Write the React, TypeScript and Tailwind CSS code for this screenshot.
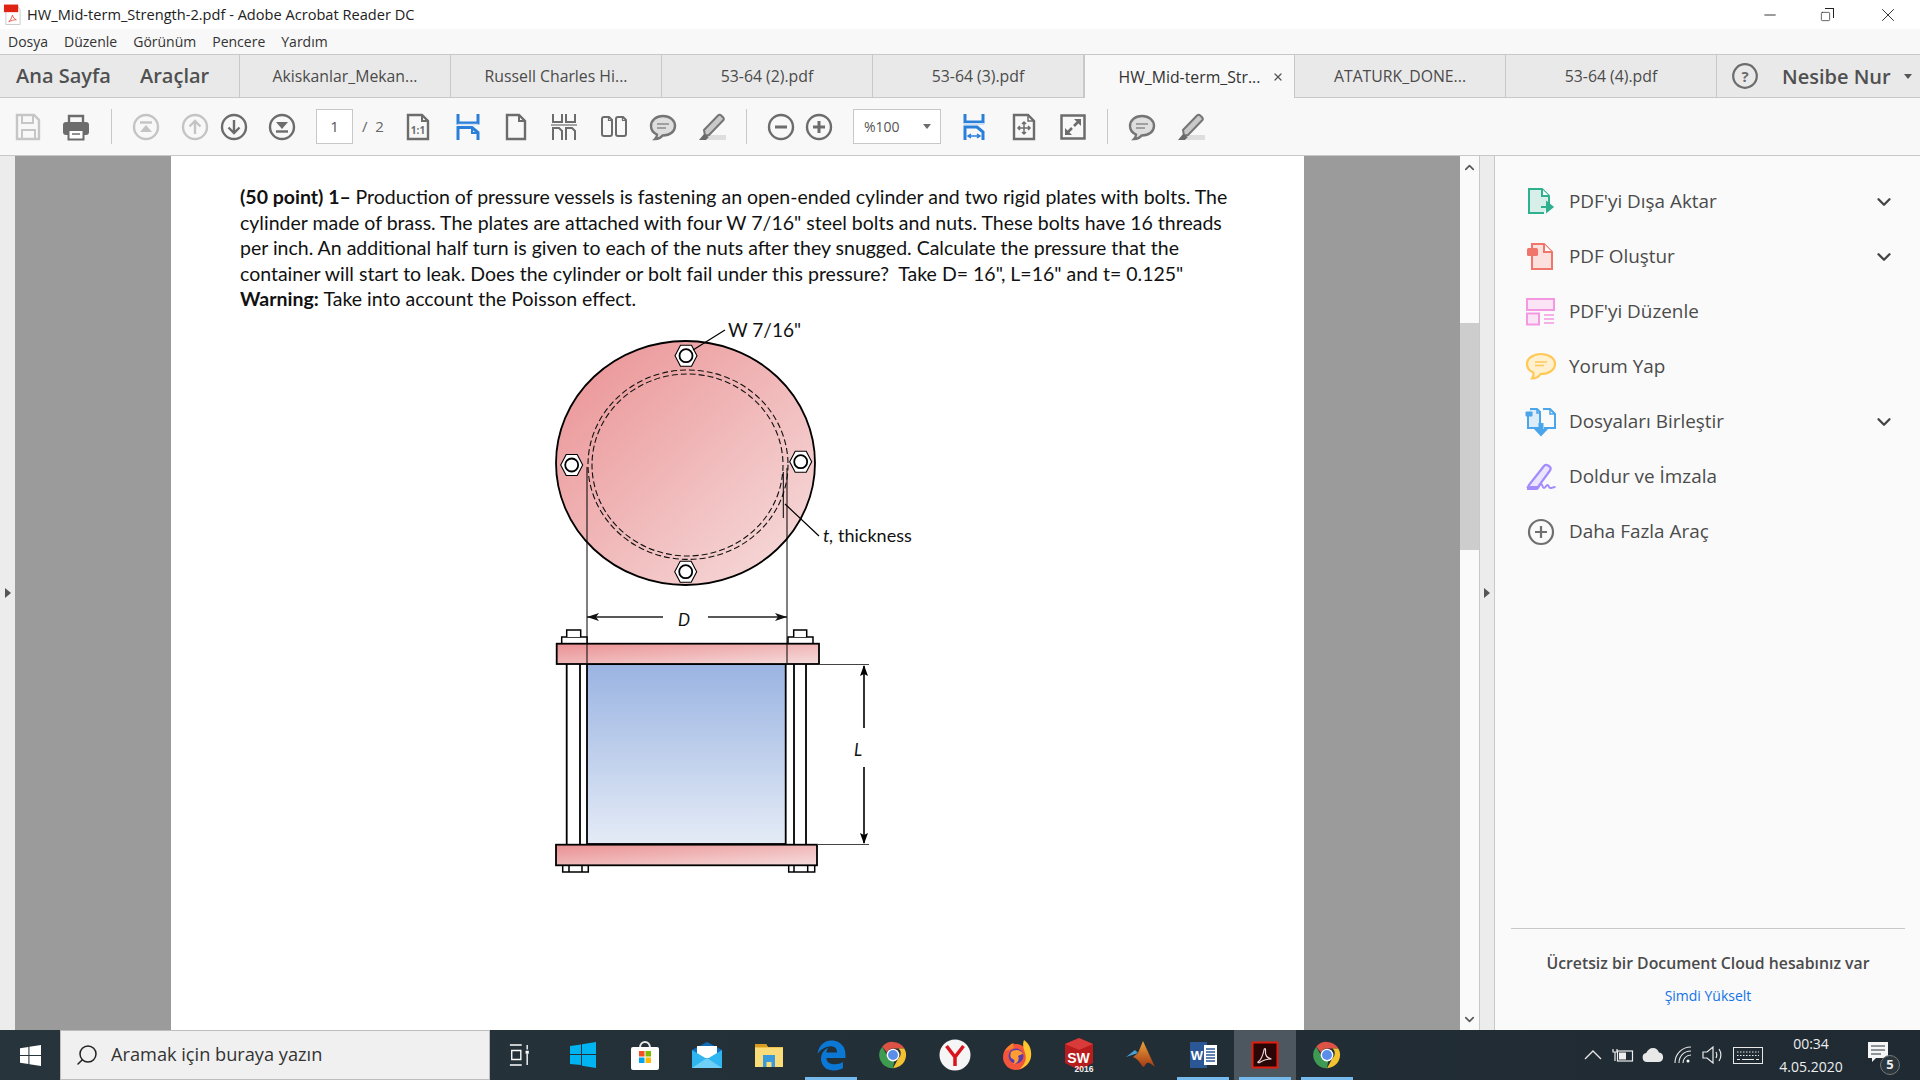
import type { ReactNode } from "react";
import { ChevronDown, ChevronUp, Minus, Search, Square, X } from "lucide-react";
import { FaEdgeLegacy } from "react-icons/fa";

const menus = ["Dosya", "Düzenle", "Görünüm", "Pencere", "Yardım"];

function Slot({ className, children }: { className: string; children: ReactNode }) {
  return <div className={`flex h-7 w-7 shrink-0 items-center justify-center ${className}`}>{children}</div>;
}

function Ico({ children }: { children: ReactNode }) {
  return (
    <svg viewBox="0 0 28 28" width="28" height="28" fill="none" strokeWidth="2.4">
      {children}
    </svg>
  );
}

function CircleIcon({ color, children }: { color: string; children: ReactNode }) {
  return (
    <Ico>
      <circle cx="14" cy="14" r="12" stroke={color} />
      {children}
    </Ico>
  );
}

function Comment() {
  return (
    <Ico>
      <path d="M14 3C7 3 2 7.500 2 13c0 4 2.500 7 6 8.500 0 2-1 3.500-2 4.500 3.500 0 6-1.500 7.500-3.500h.5c7 0 12-4 12-9.500S21 3 14 3z" fill="#dedede" stroke="#757575" />
      <path d="M8 11h12M8 15h9" stroke="#8a8a8a" strokeWidth="1.500" />
    </Ico>
  );
}

function Highlighter() {
  return (
    <Ico>
      <path d="M9 27h19v-5H12z" fill="#dedede" />
      <path d="M6 17 20 2.500c1-1 2.200-1 3.200 0l1.800 1.800c1 1 1 2.200 0 3.200L11 22l-4 .5z" fill="#c9c9c9" stroke="#757575" strokeWidth="2" />
      <path d="M6 21 1 27h7l3-3z" fill="#6a6a6a" />
    </Ico>
  );
}

function Separator() {
  return <div className="ml-[20px] h-[35px] w-px shrink-0 bg-[#c9c9c9]" />;
}

function Toolbar() {
  return (
    <div className="flex h-[58px] shrink-0 items-center border-b border-[#c8c8c8] bg-[#f8f8f8]">
      <Slot className="ml-[14px]">
        <Ico>
          <path d="M3 2h17l5 5v19H3z" stroke="#c6c6c6" />
          <path d="M8 3v7h11V3M8 26v-9h13v9" stroke="#c6c6c6" strokeWidth="2" />
        </Ico>
      </Slot>
      <Slot className="ml-[20px]">
        <Ico>
          <path d="M7 9V3h14v6" stroke="#6c6c6c" />
          <rect x="1" y="9" width="26" height="13" rx="3" fill="#6c6c6c" />
          <rect x="6.500" y="17" width="15" height="9.500" fill="#fff" stroke="#6c6c6c" strokeWidth="2" />
          <path d="M10 21h8" stroke="#6c6c6c" strokeWidth="1.500" />
        </Ico>
      </Slot>
      <div className="ml-[21px] h-[35px] w-px shrink-0 bg-[#c9c9c9]" />
      <Slot className="ml-[20px]">
        <CircleIcon color="#c4c4c4">
          <path d="M8 9.500h12" stroke="#c4c4c4" />
          <path d="M14 12 8 19h12z" fill="#c4c4c4" />
        </CircleIcon>
      </Slot>
      <Slot className="ml-[21px]">
        <CircleIcon color="#c4c4c4">
          <path d="M14 21V8M8.500 13.500 14 8l5.500 5.500" stroke="#c4c4c4" />
        </CircleIcon>
      </Slot>
      <Slot className="ml-[11px]">
        <CircleIcon color="#6c6c6c">
          <path d="M14 7v13M8.500 14.500 14 20l5.500-5.500" stroke="#6c6c6c" />
        </CircleIcon>
      </Slot>
      <Slot className="ml-[20px]">
        <CircleIcon color="#6c6c6c">
          <path d="M14 16 8 9h12z" fill="#6c6c6c" />
          <path d="M8 18.500h12" stroke="#6c6c6c" />
        </CircleIcon>
      </Slot>
      <div className="ml-[20px] flex h-[35px] w-[37px] shrink-0 items-center justify-center border border-[#c8c8c8] bg-white text-[15px] text-[#555]">
        1
      </div>
      <div className="ml-[9px] w-[23px] shrink-0 text-[15px] whitespace-nowrap text-[#666]">/&nbsp;&nbsp;2</div>
      <Slot className="ml-[19px]">
        <Ico>
          <path d="M4 2h14l6 6v18H4z" stroke="#6c6c6c" />
          <path d="M18 2v6h6" stroke="#6c6c6c" strokeWidth="2" />
          <text x="14" y="21" textAnchor="middle" fontSize="10" fontWeight="700" fill="#6c6c6c">1:1</text>
        </Ico>
      </Slot>
      <Slot className="ml-[22px]">
        <Ico>
          <path d="M4 1v9h20V1" stroke="#2a7fd9" strokeWidth="3" />
          <path d="M4 11.500h20" stroke="#cfe0f3" strokeWidth="1.500" />
          <path d="M4 27V14.500h14l6 5V27" stroke="#2a7fd9" strokeWidth="3" />
          <path d="M18 15v5h5" stroke="#2a7fd9" strokeWidth="2" />
        </Ico>
      </Slot>
      <Slot className="ml-[20px]">
        <Ico>
          <path d="M5 2h12l6 6v18H5z" stroke="#6c6c6c" />
          <path d="M17 2v6h6" stroke="#6c6c6c" strokeWidth="2" />
        </Ico>
      </Slot>
      <Slot className="ml-[20px]">
        <Ico>
          <path d="M3 1v8h9V1M16 1v8h9V1" stroke="#6c6c6c" strokeWidth="2" />
          <path d="M1 12h26" stroke="#8a8a8a" strokeWidth="1.500" />
          <path d="M3 27V15h6l3 3v9M16 27V15h6l3 3v9" stroke="#6c6c6c" strokeWidth="2" />
        </Ico>
      </Slot>
      <Slot className="ml-[22px]">
        <Ico>
          <path d="M2 6a2 2 0 0 1 2-2h5l3 3v14a2 2 0 0 1-2 2H4a2 2 0 0 1-2-2zM16 6a2 2 0 0 1 2-2h5l3 3v14a2 2 0 0 1-2 2h-6a2 2 0 0 1-2-2z" stroke="#6c6c6c" strokeWidth="2" />
          <path d="M8.500 4.500v3h3M22.500 4.500v3h3" stroke="#6c6c6c" strokeWidth="1.200" />
        </Ico>
      </Slot>
      <Slot className="ml-[21px]">
        <Comment />
      </Slot>
      <Slot className="ml-[21px]">
        <Highlighter />
      </Slot>
      <Separator />
      <Slot className="ml-[20px]">
        <CircleIcon color="#6c6c6c">
          <path d="M8 14h12" stroke="#6c6c6c" strokeWidth="3" />
        </CircleIcon>
      </Slot>
      <Slot className="ml-[10px]">
        <CircleIcon color="#6c6c6c">
          <path d="M8 14h12M14 8v12" stroke="#6c6c6c" strokeWidth="3" />
        </CircleIcon>
      </Slot>
      <div className="ml-[20px] flex h-[35px] w-[88px] shrink-0 items-center border border-[#c8c8c8] bg-white pr-[9px] pl-[10px] text-[14px] text-[#555]">
        %100
        <span className="ml-auto h-0 w-0 border-x-[4px] border-t-[5px] border-x-transparent border-t-[#6c6c6c]" />
      </div>
      <Slot className="ml-[19px]">
        <Ico>
          <path d="M5 1v8h18V1" stroke="#2a7fd9" strokeWidth="3" />
          <path d="M4 11h20" stroke="#cfe0f3" strokeWidth="2" />
          <path d="M5 27V14h12l6 5v8" stroke="#2a7fd9" strokeWidth="3" />
          <path d="M9 23h10M11 21l-3 2 3 2M17 21l3 2-3 2" stroke="#2a7fd9" strokeWidth="1.500" />
        </Ico>
      </Slot>
      <Slot className="ml-[22px]">
        <Ico>
          <path d="M4 2h14l6 6v18H4z" stroke="#6c6c6c" />
          <path d="M18 2v6h6" stroke="#6c6c6c" strokeWidth="1.500" />
          <path d="M14 9v12M8 15h12M12 11l2-2 2 2M12 19l2 2 2-2M10 13l-2 2 2 2M18 13l2 2-2 2" stroke="#6c6c6c" strokeWidth="1.500" />
        </Ico>
      </Slot>
      <Slot className="ml-[21px]">
        <Ico>
          <rect x="2.500" y="2.500" width="23" height="23" stroke="#6c6c6c" strokeWidth="2.500" />
          <path d="M15 13l5-5" stroke="#6c6c6c" strokeWidth="2.500" />
          <path d="M15 6h7v7z" fill="#6c6c6c" />
          <path d="M13 15l-5 5" stroke="#6c6c6c" strokeWidth="2.500" />
          <path d="M6 15v7h7z" fill="#6c6c6c" />
        </Ico>
      </Slot>
      <Separator />
      <Slot className="ml-[20px]">
        <Comment />
      </Slot>
      <Slot className="ml-[21px]">
        <Highlighter />
      </Slot>
    </div>
  );
}

function Tab({ label, active }: { label: string; active?: boolean }) {
  return (
    <div
      className={`relative flex h-full w-[211px] shrink-0 items-center justify-center border-t border-r border-[#c8c8c8] pt-[2px] text-[15.8px] whitespace-nowrap ${
        active ? "border-l bg-[#f8f8f8] text-[#333]" : "border-b bg-[#e9e9e9] text-[#4b4b4b]"
      }`}
    >
      {label}
      {active ? <X size={12} strokeWidth={2.5} className="absolute top-[16px] right-[10px] text-[#555]" /> : null}
    </div>
  );
}

function TabRow() {
  return (
    <div className="flex h-[44px] shrink-0">
      <div className="flex h-full w-[240px] shrink-0 items-center border-y border-r border-[#c8c8c8] bg-[#e9e9e9] pl-[16px] text-[20px] font-semibold text-[#505050]">
        <span className="w-[124px]">Ana Sayfa</span>
        <span>Araçlar</span>
      </div>
      <Tab label="Akiskanlar_Mekan..." />
      <Tab label="Russell Charles Hi..." />
      <Tab label="53-64 (2).pdf" />
      <Tab label="53-64 (3).pdf" />
      <Tab active label="HW_Mid-term_Str..." />
      <Tab label="ATATURK_DONE..." />
      <Tab label="53-64 (4).pdf" />
      <div className="flex h-full flex-1 items-center border-y border-[#c8c8c8] bg-[#e9e9e9] pl-[15px] text-[#505050]">
        <svg viewBox="0 0 26 26" width="26" height="26" fill="none">
          <circle cx="13" cy="13" r="11.800" stroke="#6c6c6c" strokeWidth="2.200" />
          <text x="13" y="18.500" textAnchor="middle" fontSize="15" fontWeight="700" fill="#6c6c6c">?</text>
        </svg>
        <span className="ml-[24px] pt-[2px] text-[20px] font-semibold whitespace-nowrap">Nesibe Nur</span>
        <span className="ml-[13px] h-0 w-0 border-x-[4px] border-t-[5px] border-x-transparent border-t-[#555]" />
      </div>
    </div>
  );
}

function Diagram() {
  return (
    <svg viewBox="540 320 400 560" width="400" height="560" className="mt-[8px] ml-[300px] block" fill="none">
      <defs>
        <linearGradient id="plate" x1="0" y1="0" x2="1" y2="1">
          <stop offset="0" stopColor="#ea9092" />
          <stop offset="1" stopColor="#f7dfdf" />
        </linearGradient>
        <linearGradient id="barA" x1="0" y1="0" x2="1" y2="1">
          <stop offset="0" stopColor="#ea9092" />
          <stop offset="1" stopColor="#f6dcdc" />
        </linearGradient>
        <linearGradient id="tube" x1="0" y1="0" x2="0" y2="1">
          <stop offset="0" stopColor="#9ab4e2" />
          <stop offset="1" stopColor="#e4ebf6" />
        </linearGradient>
      </defs>

      <ellipse cx="685.500" cy="463" rx="129.500" ry="122" fill="url(#plate)" stroke="#000" strokeWidth="1.800" />
      <ellipse cx="688" cy="464.700" rx="100" ry="94.700" stroke="#111" strokeWidth="1.100" strokeDasharray="6 3" />
      <ellipse cx="687.500" cy="465" rx="95.500" ry="91" stroke="#111" strokeWidth="1.100" strokeDasharray="6 3" />

      {[
        [686, 355.700],
        [571.700, 465],
        [800.700, 461.700],
        [685.700, 571.700],
      ].map(([x, y]) => (
        <g key={`${x}-${y}`} transform={`translate(${x} ${y})`}>
          <path d="M-11 0-5.500-10.500H5.500L11 0 5.500 10.500H-5.500z" fill="#fff" stroke="#000" strokeWidth="1.100" />
          <circle r="6.500" fill="#fff" stroke="#000" strokeWidth="1.800" />
        </g>
      ))}

      <path d="M725 330 693 350M819 536 785 504" stroke="#000" strokeWidth="1.200" />
      <path d="M783.300 472v46M787 468v187M587 467v188" stroke="#000" strokeWidth="1" />
      <text x="728" y="337" fontFamily="Lato, sans-serif" fontSize="19" fill="#111">W 7/16"</text>
      <text x="823" y="542" fontFamily="Lato, sans-serif" fontSize="18" fill="#111">
        <tspan fontStyle="italic">t,</tspan> thickness
      </text>

      <path d="M587 617h76M708 617h79" stroke="#222" strokeWidth="1.300" />
      <path d="M587 617l12-4-3 4 3 4zM787 617l-12-4 3 4-3 4z" fill="#111" />
      <text x="678" y="626" fontFamily="Lato, sans-serif" fontStyle="italic" fontSize="17" fill="#111">D</text>

      <path d="M561.700 644v-7H587v7M788 644v-7h25v7" fill="#fff" stroke="#000" strokeWidth="1.500" />
      <path d="M566.700 637v-7h14v7M793.700 637v-7h13v7" fill="#fff" stroke="#000" strokeWidth="1.500" />
      <path d="M566.700 664v180M580 664v180M806 664v180M794 664v180" stroke="#000" strokeWidth="1.800" />
      <rect x="587" y="664" width="198.700" height="180" fill="url(#tube)" stroke="#000" strokeWidth="1.800" />
      <rect x="556.700" y="643.700" width="262.300" height="20.300" fill="url(#barA)" stroke="#000" strokeWidth="1.800" />
      <rect x="556" y="844.700" width="261" height="20.600" fill="url(#barA)" stroke="#000" strokeWidth="1.800" />
      <path d="M587 644v19M787 644v19" stroke="#000" strokeWidth="1" />
      <path d="M562.700 865.500v6.500h25.600v-6.500M569 865.500v6.500M582 865.500v6.500M788.700 865.500v6.500h26v-6.500M794 865.500v6.500M807.700 865.500v6.500" stroke="#000" strokeWidth="1.500" />

      <path d="M819 664.500h50M817 844.500h52" stroke="#444" strokeWidth="1.200" />
      <path d="M864 666v62M864 767v76" stroke="#000" strokeWidth="1.600" />
      <path d="M864 665l-4 11 4-2 4 2zM864 844l-4-11 4 2 4-2z" fill="#000" />
      <text x="854" y="756" fontFamily="Lato, sans-serif" fontStyle="italic" fontSize="17" fill="#111">L</text>
    </svg>
  );
}

const lines = [
  "Production of pressure vessels is fastening an open-ended cylinder and two rigid plates with bolts. The",
  "cylinder made of brass. The plates are attached with four W 7/16\" steel bolts and nuts. These bolts have 16 threads",
  "per inch. An additional half turn is given to each of the nuts after they snugged. Calculate the pressure that the",
  "container will start to leak. Does the cylinder or bolt fail under this pressure?  Take D= 16\", L=16\" and t= 0.125\"",
];

function Page() {
  return (
    <div className="h-full w-[1133px] shrink-0 bg-white pt-[28px] pl-[69px] font-['Lato',sans-serif] text-[19.5px] leading-[25.5px] text-[#111]">
      <p className="whitespace-pre">
        <b>(50 point) 1– </b>
        {lines[0]}
      </p>
      <p className="whitespace-pre">{lines[1]}</p>
      <p className="whitespace-pre">{lines[2]}</p>
      <p className="whitespace-pre">{lines[3]}</p>
      <p className="whitespace-pre">
        <b>Warning: </b>Take into account the Poisson effect.
      </p>
      <Diagram />
    </div>
  );
}

function PaneIcon({ children }: { children: ReactNode }) {
  return (
    <svg viewBox="0 0 32 32" width="32" height="32" fill="none" className="shrink-0">
      {children}
    </svg>
  );
}

const tools: { label: string; more?: boolean; icon: ReactNode }[] = [
  {
    label: "PDF'yi Dışa Aktar",
    more: true,
    icon: (
      <>
        <path d="M19 27H4V3h13l7 7v8" fill="#d8eee8" stroke="#2fb08f" strokeWidth="2" />
        <path d="M17 3v7h7" fill="#fff" stroke="#2fb08f" strokeWidth="2" />
        <path d="M16 21h10M22 16.500l5.500 4.500-5.500 4.500z" fill="#2fb08f" stroke="#2fb08f" strokeWidth="2" />
      </>
    ),
  },
  {
    label: "PDF Oluştur",
    more: true,
    icon: (
      <>
        <path d="M7 11V3h12l8 8v17H7z" fill="#fbe0de" stroke="#f0766b" strokeWidth="2" />
        <path d="M19 3v8h8" fill="#fff" stroke="#f0766b" strokeWidth="2" />
        <rect x="2" y="7" width="11" height="8" rx="1.500" fill="#f0766b" />
      </>
    ),
  },
  {
    label: "PDF'yi Düzenle",
    icon: (
      <>
        <rect x="2" y="3" width="27" height="11" fill="#fce4f7" stroke="#f598e2" strokeWidth="2" />
        <rect x="2" y="17.500" width="12" height="11" fill="#fce4f7" stroke="#f598e2" strokeWidth="2" />
        <path d="M19 19h10M19 23h10M19 27h10" stroke="#f598e2" strokeWidth="1.500" />
      </>
    ),
  },
  {
    label: "Yorum Yap",
    icon: (
      <>
        <path d="M16 3C8.500 3 2 7 2 13c0 4 2.500 7 6.500 8.500C9 24 8 26 7 27.500c3.500 0 7-2 8.500-4.500H16c7.500 0 14-4 14-10S23.500 3 16 3z" fill="#fff1cf" stroke="#ffc857" strokeWidth="2.200" />
        <path d="M10 11h12M10 14.500h9" stroke="#ffc857" strokeWidth="1.500" />
      </>
    ),
  },
  {
    label: "Dosyaları Birleştir",
    more: true,
    icon: (
      <>
        <path d="M3 8V22h12V6l-3-3H5" fill="#dcecf9" stroke="#4ba5ea" strokeWidth="2" />
        <path d="M18 3h7l5 5v14H19" stroke="#4ba5ea" strokeWidth="2" />
        <path d="M25 3v5h5M12 3v4h3" stroke="#4ba5ea" strokeWidth="1.500" />
        <rect x="0.500" y="5.500" width="7" height="5" rx="1" fill="#4ba5ea" />
        <path d="M13.500 17h5v6h4.500l-7 7.500-7-7.500h4.500z" fill="#4ba5ea" />
      </>
    ),
  },
  {
    label: "Doldur ve İmzala",
    icon: (
      <>
        <path d="M4 24 19 5c1-1.500 2.500-1.500 4-.5l1.500 1c1.500 1 1.500 2.500.5 4L13 26H3z" fill="#ebe6ff" stroke="#a48cff" strokeWidth="2.200" />
        <path d="M2 28h10c2 0 2-5 4-5s1 4 3 4 2-3 3.500-3 1 3 3 3 2-1 5-1" stroke="#a48cff" strokeWidth="2" />
      </>
    ),
  },
  {
    label: "Daha Fazla Araç",
    icon: (
      <>
        <circle cx="16" cy="16" r="12" stroke="#6f6f6f" strokeWidth="2.200" />
        <path d="M10 16h12M16 10v12" stroke="#6f6f6f" strokeWidth="2.200" />
      </>
    ),
  },
];

function ToolsPane() {
  return (
    <div className="flex h-full w-[425px] shrink-0 flex-col bg-[#fafafa] pt-[18px] text-[#4b4b4b]">
      {tools.map((tool) => (
        <div key={tool.label} className="flex h-[55px] items-center pr-[28px] pl-[30px]">
          <PaneIcon>{tool.icon}</PaneIcon>
          <span className="ml-[12px] text-[18.9px] whitespace-nowrap">{tool.label}</span>
          {tool.more ? <ChevronDown size={22} strokeWidth={2.500} className="ml-auto -mr-[3px] text-[#444]" /> : null}
        </div>
      ))}
      <div className="mt-auto mr-[15px] ml-[16px] flex flex-col items-center border-t border-[#c8c8c8] pt-[24px] pb-[24px]">
        <div className="h-[20px] text-[15.8px] leading-[20px] font-semibold whitespace-nowrap text-[#4b4b4b]">
          Ücretsiz bir Document Cloud hesabınız var
        </div>
        <div className="mt-[13px] h-[20px] text-[14px] leading-[20px] whitespace-nowrap text-[#1473e6]">Şimdi Yükselt</div>
      </div>
    </div>
  );
}

function Main() {
  return (
    <div className="flex h-[874px] shrink-0">
      <div className="flex h-full w-[15px] shrink-0 items-center justify-center bg-[#ececec]">
        <span className="h-0 w-0 border-y-[5px] border-l-[6px] border-y-transparent border-l-[#555]" />
      </div>
      <div className="h-full w-[156px] shrink-0 bg-[#9b9b9b]" />
      <Page />
      <div className="h-full w-[156px] shrink-0 bg-[#9b9b9b]" />
      <div className="flex h-full w-[20px] shrink-0 flex-col items-center border-r border-[#c8c8c8] bg-[#fafafa]">
        <div className="flex h-[22px] items-center">
          <ChevronUp size={15} strokeWidth={2.500} className="text-[#555]" />
        </div>
        <div className="mt-[145px] h-[227px] w-[19px] bg-[#cdcdcd]" />
        <div className="mt-auto flex h-[22px] items-center">
          <ChevronDown size={15} strokeWidth={2.500} className="text-[#555]" />
        </div>
      </div>
      <div className="flex h-full w-[15px] shrink-0 items-center justify-center border-r border-[#c8c8c8] bg-[#ececec]">
        <span className="h-0 w-0 border-y-[5px] border-l-[6px] border-y-transparent border-l-[#555]" />
      </div>
      <ToolsPane />
    </div>
  );
}

function TaskCell({ children, open, active }: { children: ReactNode; open?: boolean; active?: boolean }) {
  return (
    <div className={`relative flex h-full w-[62px] shrink-0 items-center justify-center ${active ? "bg-[#4c575f]" : ""}`}>
      {children}
      {open ? <div className="absolute right-[5px] bottom-0 left-[5px] h-[3px] bg-[#76b9ed]" /> : null}
    </div>
  );
}

function Chrome() {
  return (
    <svg viewBox="0 0 32 32" width="30" height="32">
      <path d="M16 2a14 14 0 0 1 12.100 7H16a7 7 0 0 0-6.500 4.300L4.500 7.200A14 14 0 0 1 16 2z" fill="#dc5245" />
      <path d="M28.100 9A14 14 0 0 1 16 30l5.800-10.500A7 7 0 0 0 22 9z" fill="#f2c230" />
      <path d="M16 30A14 14 0 0 1 4.500 7.200l5.800 10.300a7 7 0 0 0 7 5z" fill="#3f9a52" />
      <circle cx="16" cy="16" r="6.800" fill="#fff" />
      <circle cx="16" cy="16" r="5.300" fill="#5a8ee8" />
    </svg>
  );
}

function Taskbar() {
  return (
    <div className="flex h-[50px] shrink-0 bg-linear-to-r from-[#27343b] to-[#1f2a33] text-white">
      <div className="flex h-full w-[60px] shrink-0 items-center justify-center">
        <svg viewBox="0 0 20 20" width="21" height="21" fill="#fff">
          <path d="M0 3l8-1.200V9.500H0zM9 1.600 20 0v9.500H9zM0 10.500h8v7.700L0 17zM9 10.500h11V20l-11-1.600z" />
        </svg>
      </div>
      <div className="flex h-full w-[430px] shrink-0 items-center border border-[#bdbdbd] bg-[#f0f0f0] pl-[14px] text-[#333]">
        <Search size={24} strokeWidth={1.500} className="-scale-x-100 text-[#222]" />
        <span className="ml-[12px] text-[18.2px] whitespace-nowrap">Aramak için buraya yazın</span>
      </div>
      <TaskCell>
        <svg viewBox="0 0 22 26" width="20" height="24" fill="none" stroke="#fff" strokeWidth="1.500" className="-ml-[4px]">
          <path d="M1 2h13M1 24h13M3 8h10v10H3zM20 2v5M20 12v12" />
          <path d="M19 9h2v2h-2z" fill="#fff" />
        </svg>
      </TaskCell>
      <TaskCell>
        <svg viewBox="0 0 28 28" width="28" height="28" fill="#00b4f1">
          <path d="M1 5l11-1.500V13H1zM13 3.300 27 1v12H13zM1 14h11v10L1 23zM13 14h14v13l-14-2.300z" />
        </svg>
      </TaskCell>
      <TaskCell>
        <svg viewBox="0 0 30 32" width="30" height="32">
          <path d="M10 9c0-8 10-8 10 0" fill="none" stroke="#e8e8e8" strokeWidth="2" />
          <rect x="1" y="8" width="28" height="23" rx="2" fill="#fff" />
          <rect x="9" y="12" width="5.500" height="5.500" fill="#f25022" />
          <rect x="15.500" y="12" width="5.500" height="5.500" fill="#7fba00" />
          <rect x="9" y="18.500" width="5.500" height="5.500" fill="#00a4ef" />
          <rect x="15.500" y="18.500" width="5.500" height="5.500" fill="#ffb900" />
        </svg>
      </TaskCell>
      <TaskCell>
        <svg viewBox="0 0 32 28" width="32" height="28">
          <path d="M1 9 16 1l15 8v18H1z" fill="#0f6cbd" />
          <path d="M6 5h20v12H6z" fill="#fff" />
          <path d="M1 9l15 9 15-9v18H1z" fill="#2fb6f0" />
          <path d="M1 27l15-10 15 10z" fill="#6fd0f7" />
        </svg>
      </TaskCell>
      <TaskCell>
        <svg viewBox="0 0 30 28" width="30" height="28">
          <path d="M1 3h11l2 3h15v20H1z" fill="#f0c24b" />
          <path d="M1 3h11l2 3H1z" fill="#d99b1f" />
          <path d="M1 7h28v19H1z" fill="#fbdc7a" />
          <path d="M9 14h12v12h-3.500v-5h-5v5H9z" fill="#3a9bdc" />
        </svg>
      </TaskCell>
      <TaskCell open>
        <FaEdgeLegacy size={31} color="#0b78d6" />
      </TaskCell>
      <TaskCell>
        <Chrome />
      </TaskCell>
      <TaskCell>
        <svg viewBox="0 0 32 32" width="32" height="32">
          <circle cx="16" cy="16" r="15.500" fill="#f5f5f5" />
          <path d="M7.500 7 16 18v9M24.500 7 16 18" fill="none" stroke="#d9141e" strokeWidth="3.500" />
        </svg>
      </TaskCell>
      <TaskCell>
        <svg viewBox="0 0 32 32" width="32" height="32">
          <circle cx="15" cy="18" r="13" fill="#f2553b" />
          <path d="M23 1c6 4 8 11 7 17-1 6-6 11-12 12 6-4 8-10 6-16-1-4-3-8-1-13z" fill="#ffc52e" />
          <path d="M4 12c2-4 5-7 9-8-1 2-1 4 0 5-3 1-6 2-9 3z" fill="#f7822b" />
          <circle cx="15" cy="17" r="7.500" fill="#5a3dab" />
          <path d="M10 13c3-3 10-3 12 2-2 0-3 1-5 2 2 4-1 8-5 8 2-2 2-4 0-5-3-1-3-4-2-7z" fill="#ff9d33" />
        </svg>
      </TaskCell>
      <TaskCell>
        <svg viewBox="0 0 36 36" width="36" height="36">
          <path d="M4 7 18 1l14 6v19l-14 7-14-7z" fill="#b81c1c" />
          <path d="M4 7l14 6 14-6-14-6z" fill="#d93a3a" />
          <text x="17.500" y="26" textAnchor="middle" fontFamily="Liberation Sans, sans-serif" fontSize="14" fontWeight="700" fill="#fff">SW</text>
          <text x="23" y="35" textAnchor="middle" fontFamily="Liberation Sans, sans-serif" fontSize="8.500" fontWeight="700" fill="#eee">2016</text>
        </svg>
      </TaskCell>
      <TaskCell>
        <svg viewBox="0 0 32 32" width="32" height="32">
          <defs>
            <linearGradient id="mat" x1="0" y1="0" x2="0" y2="1">
              <stop offset="0" stopColor="#f0a33a" />
              <stop offset="1" stopColor="#a33a14" />
            </linearGradient>
          </defs>
          <path d="M1 18 10 11l3 3z" fill="#4aa0d6" />
          <path d="M8 18 13 14l5-12 12 26c-3-2-5-5-8-4-2 1-2 4-4 4-3-4-5-8-10-10z" fill="url(#mat)" />
        </svg>
      </TaskCell>
      <TaskCell open>
        <svg viewBox="0 0 30 32" width="30" height="32">
          <path d="M2 3h17v26H2z" fill="#2b5797" />
          <path d="M16 6h13v20H16z" fill="#fff" />
          <path d="M18 10h9M18 13h9M18 16h9M18 19h9M18 22h9" stroke="#2b5797" strokeWidth="1.500" />
          <text x="9" y="21" textAnchor="middle" fontFamily="Liberation Sans, sans-serif" fontSize="13" fontWeight="700" fill="#fff">W</text>
        </svg>
      </TaskCell>
      <TaskCell open active>
        <svg viewBox="0 0 28 28" width="28" height="28">
          <rect x="1.500" y="1.500" width="25" height="25" fill="#2a0606" stroke="#e01e10" strokeWidth="2" />
          <path d="M7 21c3-2 5-7 6-12 .300-2 2-2 1.500 1-.500 4 2 7 6 8-4 0-8 1-11 3-1.500 1-3 1-2.500 0z" fill="none" stroke="#e8d8d8" strokeWidth="1.200" />
        </svg>
      </TaskCell>
      <TaskCell open>
        <Chrome />
      </TaskCell>
      <div className="ml-auto flex h-full items-center pr-[16px]">
        <div className="flex h-full w-[30px] items-center justify-center">
          <svg viewBox="0 0 18 10" width="18" height="10" fill="none" stroke="#e8e8e8" strokeWidth="1.300">
            <path d="M1 9l8-8 8 8" />
          </svg>
        </div>
        <div className="flex h-full w-[30px] items-center justify-center">
          <svg viewBox="0 0 22 14" width="22" height="14" fill="none" stroke="#eee" strokeWidth="1.200">
            <path d="M1 1v3h4V1M3 4v9" />
            <rect x="5.500" y="3" width="15" height="10" />
            <rect x="7" y="4.500" width="7" height="7" fill="#eee" stroke="none" />
          </svg>
        </div>
        <div className="flex h-full w-[30px] items-center justify-center">
          <svg viewBox="0 0 22 14" width="22" height="14" fill="#e8e8e8">
            <path d="M5 14a4.500 4.500 0 0 1-.800-8.900C5.500 2 8 0 11 0c3 0 5 2 6 4.500a4.800 4.800 0 0 1 0 9.500z" />
          </svg>
        </div>
        <div className="flex h-full w-[30px] items-center justify-center">
          <svg viewBox="0 0 18 18" width="18" height="18" fill="none" stroke="#e8e8e8" strokeWidth="1.100">
            <path d="M1 17C1 8 8 1 17 1M5 17c0-7 5-12 12-12M9 17c0-4 3-8 8-8" />
            <circle cx="14" cy="15" r="1.500" fill="#fff" stroke="none" />
          </svg>
        </div>
        <div className="flex h-full w-[30px] items-center justify-center">
          <svg viewBox="0 0 22 18" width="22" height="18" fill="none" stroke="#e8e8e8" strokeWidth="1.200">
            <path d="M1 6h4l6-5v16l-6-5H1zM14 6c1 2 1 4 0 6M17 3c2.500 3.500 2.500 8.500 0 12" />
          </svg>
        </div>
        <div className="flex h-full w-[40px] items-center justify-center">
          <svg viewBox="0 0 30 17" width="30" height="17" fill="none" stroke="#e8e8e8" strokeWidth="1">
            <rect x="0.500" y="0.500" width="29" height="16" />
            <path d="M4 5h22M4 8.500h22" strokeDasharray="1.500 1.500" />
            <path d="M4 12.500h3M9 12.500h12M23 12.500h3" />
          </svg>
        </div>
        <div className="flex h-full w-[86px] flex-col items-center justify-center text-[14px] leading-[23px] text-[#eee]">
          <div>00:34</div>
          <div>4.05.2020</div>
        </div>
        <div className="relative flex h-full w-[50px] items-center justify-center">
          <svg viewBox="0 0 20 22" width="20" height="22" className="-mt-[4px] -ml-[3px]">
            <path d="M0 0h20v16H8l-4 4v-4H0z" fill="#f5f5f5" />
            <path d="M3 4h14M3 8h14M3 12h10" stroke="#27343b" strokeWidth="1" />
          </svg>
          <div className="absolute top-[25px] left-[26px] flex h-[20px] w-[20px] items-center justify-center rounded-full border border-[#777] bg-[#2c363d] text-[13px] font-bold text-[#eee]">
            5
          </div>
        </div>
      </div>
    </div>
  );
}

export default function App() {
  return (
    <div className="flex h-[1080px] w-[1920px] flex-col overflow-hidden bg-white font-['Open_Sans',sans-serif]">
      <div className="flex h-[29px] shrink-0 items-center bg-white text-[14.6px] text-[#222]">
        <svg viewBox="0 0 20 24" width="19" height="24" className="ml-[3px]">
          <path d="M3 2h11l4 4v16H3z" fill="#fff" stroke="#c9c9c9" strokeWidth="1" />
          <rect x="1" y="1" width="15" height="8" fill="#e02414" />
          <path d="M6 19c2-1 3-4 4-7 .500 3 2 4 4 5-3 0-5 1-8 2z" fill="none" stroke="#e25b4d" strokeWidth="1" />
        </svg>
        <span className="ml-[5px] whitespace-nowrap">HW_Mid-term_Strength-2.pdf - Adobe Acrobat Reader DC</span>
        <div className="ml-auto flex h-full items-center text-[#222]">
          <Minus size={18} strokeWidth={1.200} className="mr-[41px]" />
          <div className="relative mr-[43px] h-[14px] w-[14px]">
            <Square size={11} strokeWidth={1.500} className="absolute bottom-0 left-0 bg-white" />
            <div className="absolute top-0 right-0 h-[10px] w-[9px] border-t border-r border-[#222]" />
          </div>
          <X size={22} strokeWidth={1} className="mr-[21px]" />
        </div>
      </div>
      <div className="flex h-[25px] shrink-0 items-center bg-[#f8f8f8] pl-[8px] text-[14px] text-[#333]">
        {menus.map((m) => (
          <span key={m} className="mr-[16px] whitespace-nowrap">
            {m}
          </span>
        ))}
      </div>
      <TabRow />
      <Toolbar />
      <Main />
      <Taskbar />
    </div>
  );
}
